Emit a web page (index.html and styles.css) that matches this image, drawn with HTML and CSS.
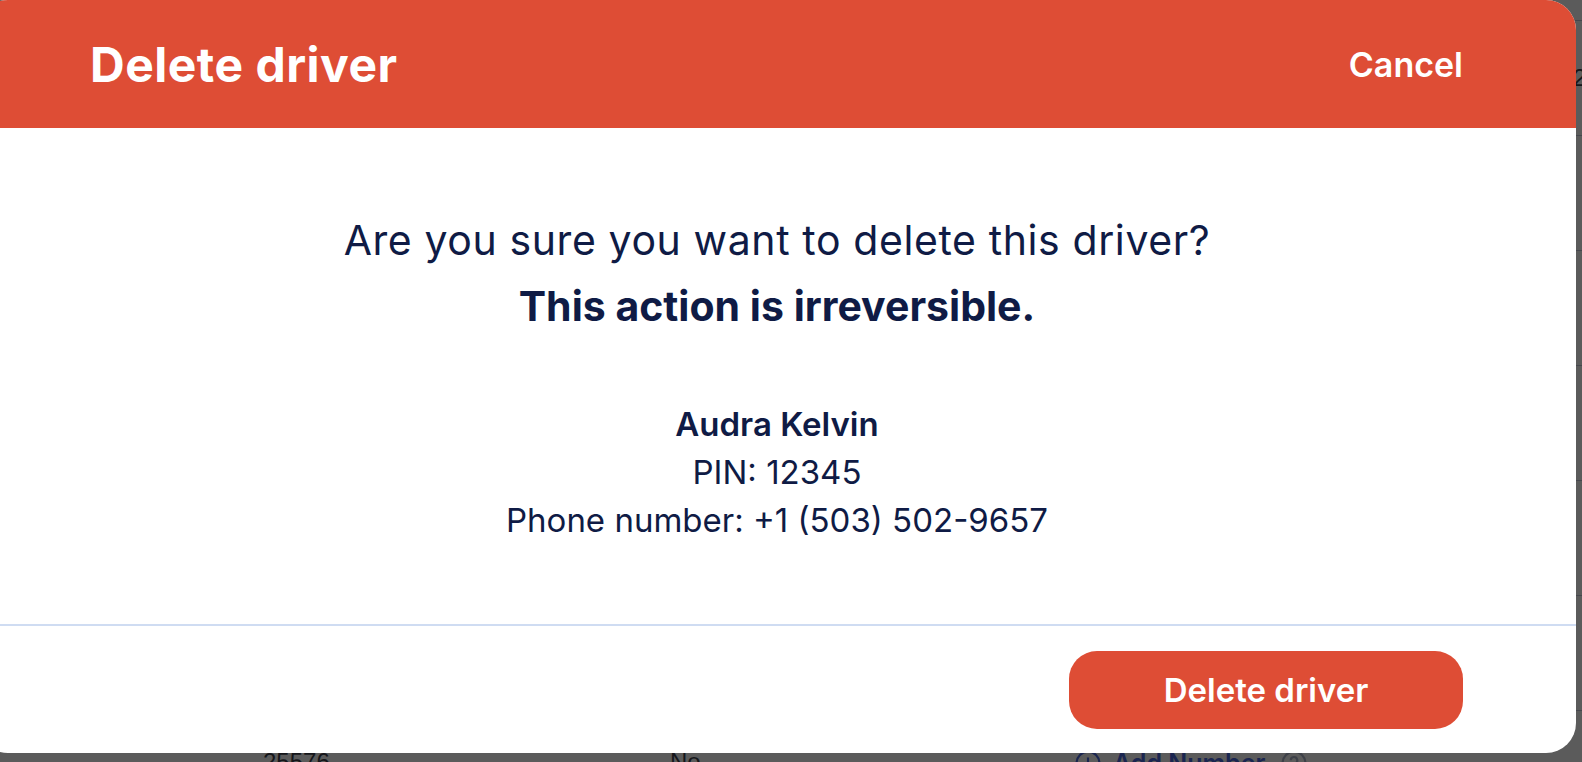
FILE: index.html
```html
<!DOCTYPE html>
<html lang="en">
<head>
  <meta charset="UTF-8">
  <meta name="viewport" content="width=device-width, initial-scale=1.0">
  <title>Delete driver</title>
  <link rel="stylesheet" href="styles.css">
</head>
<body>
<div class="page">
  <div class="table">
    <div class="row">
      <div class="cell col-last">2</div>
    </div>
    <div class="row"></div>
    <div class="row"></div>
    <div class="row"></div>
    <div class="row"></div>
    <div class="row"></div>
    <div class="row row-last">
      <div class="cell col-id">25576</div>
      <div class="cell">No</div>
      <div class="cell link">
        <svg class="ico" viewBox="0 0 24 24" width="26" height="26"><circle cx="12" cy="12" r="10.5" fill="none" stroke="currentColor" stroke-width="2"/><path d="M12 7v10M7 12h10" stroke="currentColor" stroke-width="2"/></svg>
        <span class="add">Add Number</span>
        <svg class="ico help" viewBox="0 0 24 24" width="26" height="26"><circle cx="12" cy="12" r="10.5" fill="none" stroke="currentColor" stroke-width="2"/><path d="M9 9.5a3 3 0 1 1 4 2.8c-.7.3-1 .9-1 1.7v.5" fill="none" stroke="currentColor" stroke-width="2"/><circle cx="12" cy="17.5" r="1.2" fill="currentColor"/></svg>
      </div>
    </div>
  </div>
</div>

<div class="modal">
  <div class="modal-header">
    <h1>Delete driver</h1>
    <button class="cancel">Cancel</button>
  </div>
  <div class="modal-body">
    <p class="question">Are you sure you want to delete this driver?</p>
    <p class="warning">This action is irreversible.</p>
    <div class="driver">
      <div class="name">Audra Kelvin</div>
      <div>PIN: 12345</div>
      <div>Phone number: +1 (503) 502-9657</div>
    </div>
  </div>
  <div class="modal-footer">
    <button class="delete-btn">Delete driver</button>
  </div>
</div>
</body>
</html>
```

FILE: styles.css
```css
body {
  margin: 0;
  background: #5b5b5b;
  font-family: Inter, 'Noto Sans', sans-serif;
  overflow: hidden;
  height: 762px;
}
.page {
  padding-top: 20px;
  height: 742px;
  overflow: hidden;
}
.table {
  display: flex;
  flex-direction: column;
}
.row {
  display: grid;
  grid-template-columns: 263px 407px 405px 498px 1fr;
  height: 114px;
  flex: none;
  border-top: 1px solid #45474d;
  align-items: center;
  font-family: 'Liberation Sans', Arial, sans-serif;
  font-size: 24px;
  color: #15161a;
}
.row-last {
  align-items: start;
  padding-top: 37px;
  box-sizing: border-box;
}
.col-id {
  grid-column: 2;
}
.col-last {
  grid-column: 5;
}
.cell.link {
  display: flex;
  align-items: center;
  gap: 12px;
  color: #1a2550;
  font-family: Inter, sans-serif;
  font-weight: 600;
  font-size: 25px;
}
.ico {
  flex: none;
}
.help {
  color: #3d4048;
  margin-left: 4px;
}
.modal {
  position: absolute;
  top: 0;
  left: -22px;
  width: 1598px;
  height: 753px;
  background: #fff;
  border-radius: 30px;
  overflow: hidden;
  display: flex;
  flex-direction: column;
  color: #0f1b45;
}
.modal-header {
  height: 128px;
  flex: none;
  background: #de4d35;
  display: flex;
  align-items: center;
  justify-content: space-between;
  padding: 0 113px 0 112px;
  color: #fff;
}
.modal-header h1 {
  margin: 0;
  font-size: 48px;
  font-weight: 700;
  letter-spacing: 0.5px;
}
.cancel {
  background: none;
  border: none;
  padding: 0;
  color: #fff;
  font-family: inherit;
  font-size: 34px;
  font-weight: 600;
  cursor: pointer;
}
.modal-body {
  flex: 1;
  padding-top: 87px;
  text-align: center;
  border-bottom: 2px solid #cfdcf2;
}
.modal-body p {
  margin: 0;
  font-size: 41px;
  line-height: 50px;
}
.question {
  margin-bottom: 16px !important;
  letter-spacing: 0.6px;
}
.warning {
  font-weight: 700;
}
.driver {
  margin-top: 69px;
  font-size: 33px;
  line-height: 48px;
}
.driver .name {
  font-weight: 600;
}
.modal-footer {
  flex: none;
  display: flex;
  justify-content: flex-end;
  padding: 25px 113px 24px 0;
}
.delete-btn {
  width: 394px;
  height: 78px;
  border: none;
  border-radius: 28px;
  background: #de4d35;
  color: #fff;
  font-family: inherit;
  font-size: 33px;
  font-weight: 600;
  cursor: pointer;
}
```
